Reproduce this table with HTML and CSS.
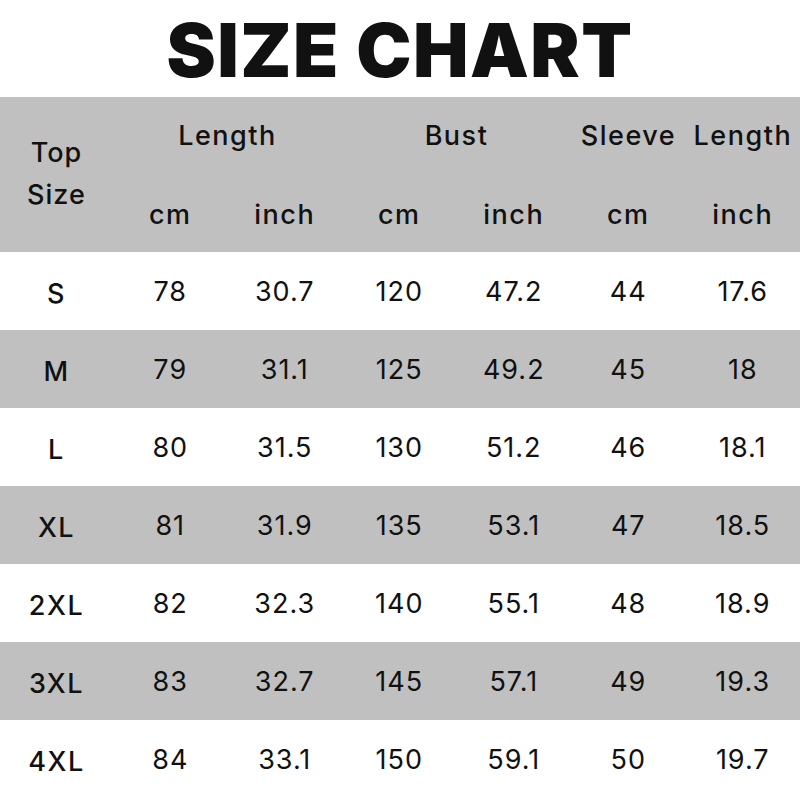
FILE: index.html
```html
<!DOCTYPE html>
<html>
<head>
<meta charset="utf-8">
<link rel="stylesheet" href="styles.css">
</head>
<body>
<div class="page">
  <h1 class="title">SIZE CHART</h1>
  <div class="chart">
    <div class="head">
      <div class="cell top-size">Top<br>Size</div>
      <div class="cell group g1">Length</div>
      <div class="cell group g2">Bust</div>
      <div class="cell group g3">Sleeve&nbsp; Length</div>
      <div class="cell unit">cm</div>
      <div class="cell unit">inch</div>
      <div class="cell unit">cm</div>
      <div class="cell unit">inch</div>
      <div class="cell unit">cm</div>
      <div class="cell unit">inch</div>
    </div>
    <div class="row"><div class="cell size">S</div><div class="cell">78</div><div class="cell">30.7</div><div class="cell">120</div><div class="cell">47.2</div><div class="cell">44</div><div class="cell">17.6</div></div>
    <div class="row alt"><div class="cell size">M</div><div class="cell">79</div><div class="cell">31.1</div><div class="cell">125</div><div class="cell">49.2</div><div class="cell">45</div><div class="cell">18</div></div>
    <div class="row"><div class="cell size">L</div><div class="cell">80</div><div class="cell">31.5</div><div class="cell">130</div><div class="cell">51.2</div><div class="cell">46</div><div class="cell">18.1</div></div>
    <div class="row alt"><div class="cell size">XL</div><div class="cell">81</div><div class="cell">31.9</div><div class="cell">135</div><div class="cell">53.1</div><div class="cell">47</div><div class="cell">18.5</div></div>
    <div class="row"><div class="cell size">2XL</div><div class="cell">82</div><div class="cell">32.3</div><div class="cell">140</div><div class="cell">55.1</div><div class="cell">48</div><div class="cell">18.9</div></div>
    <div class="row alt"><div class="cell size">3XL</div><div class="cell">83</div><div class="cell">32.7</div><div class="cell">145</div><div class="cell">57.1</div><div class="cell">49</div><div class="cell">19.3</div></div>
    <div class="row"><div class="cell size">4XL</div><div class="cell">84</div><div class="cell">33.1</div><div class="cell">150</div><div class="cell">59.1</div><div class="cell">50</div><div class="cell">19.7</div></div>
  </div>
</div>
</body>
</html>
```

FILE: styles.css
```css
* { box-sizing: border-box; }
html, body { margin: 0; padding: 0; background: #ffffff; }
body {
  font-family: Inter, "Noto Sans", "DejaVu Sans", sans-serif;
  color: #111111;
  width: 800px;
  height: 800px;
  overflow: hidden;
}
.page { width: 800px; }
.title {
  margin: 0;
  height: 97px;
  display: flex;
  align-items: center;
  justify-content: center;
  font-size: 74px;
  font-weight: 900;
  letter-spacing: 1.5px;
  line-height: 1;
  padding-top: 2px;
}
.chart { width: 800px; }
.head, .row {
  display: grid;
  grid-template-columns: 113px repeat(6, 1fr);
}
.head {
  background: #c0c0c0;
  grid-template-rows: 77px 78px;
}
.row { height: 78px; }
.row.alt { background: #c0c0c0; }
.cell {
  display: flex;
  align-items: center;
  justify-content: center;
  font-size: 27px;
  font-weight: 400;
  letter-spacing: 1px;
  text-align: center;
}
.top-size {
  grid-row: 1 / 3;
  grid-column: 1;
  font-weight: 500;
  line-height: 42px;
  padding-bottom: 2px;
}
.group { font-weight: 500; padding-top: 0; letter-spacing: 1.5px; }
.g1 { grid-column: 2 / 4; }
.g2 { grid-column: 4 / 6; }
.g3 { grid-column: 6 / 8; white-space: nowrap; padding-left: 2px; }
.unit { font-weight: 500; padding-top: 2px; letter-spacing: 1.5px; }
.size { font-weight: 500; padding-top: 4px; letter-spacing: 1.5px; }
```
